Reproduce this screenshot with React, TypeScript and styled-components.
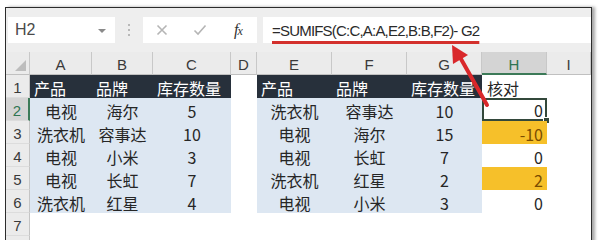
import React from 'react';
import styled, { createGlobalStyle, css } from 'styled-components';

const Global = createGlobalStyle`
  html, body { margin: 0; padding: 0; background: #fff; }
  body { font-family: "Liberation Sans", "Noto Sans CJK SC", sans-serif; overflow: hidden; }
`;

const Page = styled.div`
  width: 600px;
  height: 240px;
  padding: 7px 0 0 5px;
  box-sizing: border-box;
  overflow: hidden;
  background: #fff;
`;

const Frame = styled.div`
  position: relative;
  width: 587px;
  height: 240px;
  box-sizing: border-box;
  border: 1px solid #2c2c2c;
  border-bottom: none;
  box-shadow: 3px 0 3px rgba(0, 0, 0, 0.35);
  background: #fff;
  overflow: visible;
`;

const FormulaBar = styled.div`
  display: flex;
  align-items: flex-start;
  height: 44px;
  padding: 9px 0 0 2px;
  box-sizing: border-box;
  background: #eeeeee;
`;

const NameBox = styled.div`
  width: 107px;
  height: 26px;
  box-sizing: border-box;
  background: #fff;
  display: flex;
  align-items: center;
  justify-content: space-between;
  padding: 0 9px 0 7px;
  font-size: 16px;
  color: #4a4a4a;
`;

const DropArrow = styled.span`
  width: 0;
  height: 0;
  border-left: 4px solid transparent;
  border-right: 4px solid transparent;
  border-top: 4px solid #8a8a8a;
  margin-top: 1px;
`;

const Dots = styled.div`
  width: 28px;
  height: 26px;
  display: flex;
  flex-direction: column;
  align-items: center;
  justify-content: center;
  gap: 3px;
`;

const Dot = styled.span`
  width: 2px;
  height: 2px;
  background: #b8b8b8;
`;

const FxBox = styled.div`
  width: 114px;
  height: 26px;
  background: #fff;
  display: grid;
  grid-template-columns: repeat(3, 38px);
  align-items: center;
  justify-items: center;
`;

const FxLabel = styled.span`
  font-family: "Liberation Serif", serif;
  font-style: italic;
  font-size: 16px;
  color: #333;
  letter-spacing: -1px;
`;

const FxSub = styled.span`
  font-size: 12px;
`;

const FormulaInput = styled.div`
  flex: 1;
  margin-left: 6px;
  height: 26px;
  background: #fff;
  display: flex;
  align-items: center;
  padding-left: 9px;
  font-size: 15px;
  letter-spacing: -0.8px;
  color: #2a2a2a;
  white-space: nowrap;
`;

const FormulaText = styled.span`
  text-decoration: underline;
  text-decoration-color: #d3302c;
  text-decoration-thickness: 3px;
  text-underline-offset: 5px;
`;

const Sheet = styled.div`
  display: grid;
  grid-template-columns: 24px 62px 61px 78px 26px 75px 75px 75px 65px 1fr;
  grid-auto-rows: 23px;
`;

const HeaderBase = css`
  background: #ebebeb;
  display: flex;
  align-items: center;
  justify-content: center;
  box-sizing: border-box;
  font-size: 15px;
  color: #3a3a3a;
`;

const Corner = styled.div`
  ${HeaderBase};
  position: relative;
  border-right: 1px solid #c8c8c8;
  border-bottom: 1px solid #c0c0c0;
  &::after {
    content: '';
    position: absolute;
    right: 3px;
    bottom: 3px;
    border-left: 11px solid transparent;
    border-bottom: 11px solid #bdbdbd;
  }
`;

const ColHead = styled.div<{ $active?: boolean }>`
  ${HeaderBase};
  padding-top: 3px;
  border-right: 1px solid #c8c8c8;
  border-bottom: 1px solid #c0c0c0;
  ${(p) =>
    p.$active &&
    css`
      background: #d4d4d4;
      color: #2f7552;
      border-bottom: 2px solid #3c7a58;
    `}
`;

const RowHead = styled.div<{ $active?: boolean }>`
  ${HeaderBase};
  padding-top: 3px;
  border-right: 1px solid #c4c4c4;
  border-bottom: 1px solid #dcdcdc;
  ${(p) =>
    p.$active &&
    css`
      background: #d4d4d4;
      color: #2f7552;
      border-right: 2px solid #3c7a58;
    `}
`;

type Kind = 'head' | 'body' | 'plain' | 'warn';

const kindStyles: Record<Kind, ReturnType<typeof css>> = {
  head: css`
    background: #27303b;
    color: #fff;
    justify-content: flex-start;
    padding-left: 4px;
  `,
  body: css`
    background: #dde7f2;
    color: #262626;
    justify-content: center;
  `,
  plain: css`
    background: #fff;
    color: #262626;
    justify-content: flex-end;
    padding-right: 4px;
  `,
  warn: css`
    background: #f6c02a;
    color: #7a4c00;
    justify-content: flex-end;
    padding-right: 4px;
  `,
};

const Cell = styled.div<{ $kind: Kind; $left?: boolean; $selected?: boolean }>`
  position: relative;
  display: flex;
  align-items: center;
  box-sizing: border-box;
  padding-top: 3px;
  font-family: "Noto Sans CJK SC", "Liberation Sans", sans-serif;
  font-size: 16px;
  line-height: 20px;
  white-space: nowrap;
  ${(p) => kindStyles[p.$kind]};
  ${(p) =>
    p.$left &&
    css`
      justify-content: flex-start;
      padding-left: 5px;
    `}
  ${(p) =>
    p.$selected &&
    css`
      border: 2px solid #33483b;
      padding-right: 2px;
      padding-top: 1px;
      &::after {
        content: '';
        position: absolute;
        right: -5px;
        bottom: -5px;
        width: 5px;
        height: 5px;
        background: #33483b;
        border: 1px solid #fff;
      }
    `}
`;

const Empty = styled.div`
  background: #fff;
`;

const Overlay = styled.svg`
  position: absolute;
  left: 0;
  top: 0;
  pointer-events: none;
`;

const cols = ['A', 'B', 'C', 'D', 'E', 'F', 'G', 'H', 'I'];

const rows: string[][] = [
  ['产品', '品牌', '库存数量', '', '产品', '品牌', '库存数量', '核对'],
  ['电视', '海尔', '5', '', '洗衣机', '容事达', '10', '0'],
  ['洗衣机', '容事达', '10', '', '电视', '海尔', '15', '-10'],
  ['电视', '小米', '3', '', '电视', '长虹', '7', '0'],
  ['电视', '长虹', '7', '', '洗衣机', '红星', '2', '2'],
  ['洗衣机', '红星', '4', '', '电视', '小米', '3', '0'],
];

const XIcon = () => (
  <svg width="12" height="12" viewBox="0 0 12 12">
    <path d="M1.5 1.5 L10.5 10.5 M10.5 1.5 L1.5 10.5" stroke="#b5b5b5" strokeWidth="1.6" fill="none" />
  </svg>
);

const CheckIcon = () => (
  <svg width="14" height="12" viewBox="0 0 14 12">
    <path d="M1.5 6.5 L5 10 L12.5 1.5" stroke="#b5b5b5" strokeWidth="1.6" fill="none" />
  </svg>
);

function renderRow(r: number) {
  const data = rows[r - 1];
  const cells: React.ReactNode[] = [];
  for (let c = 0; c < 9; c++) {
    const key = `${r}-${c}`;
    if (!data || c === 3 || c === 8) {
      cells.push(<Empty key={key} />);
      continue;
    }
    const v = data[c];
    if (c === 7) {
      if (r === 1) {
        cells.push(
          <Cell key={key} $kind="plain" $left>
            {v}
          </Cell>
        );
      } else {
        const warn = v !== '0';
        cells.push(
          <Cell key={key} $kind={warn ? 'warn' : 'plain'} $selected={r === 2}>
            {v}
          </Cell>
        );
      }
      continue;
    }
    cells.push(
      <Cell key={key} $kind={r === 1 ? 'head' : 'body'}>
        {v}
      </Cell>
    );
  }
  return (
    <React.Fragment key={r}>
      <RowHead $active={r === 2}>{r <= 7 ? r : ''}</RowHead>
      {cells}
    </React.Fragment>
  );
}

export default function App() {
  return (
    <>
      <Global />
      <Page>
        <Frame>
          <FormulaBar>
            <NameBox>
              <span>H2</span>
              <DropArrow />
            </NameBox>
            <Dots>
              <Dot />
              <Dot />
              <Dot />
            </Dots>
            <FxBox>
              <XIcon />
              <CheckIcon />
              <FxLabel>
                f<FxSub>x</FxSub>
              </FxLabel>
            </FxBox>
            <FormulaInput>
              <FormulaText>=SUMIFS(C:C,A:A,E2,B:B,F2)- G2</FormulaText>
            </FormulaInput>
          </FormulaBar>
          <Sheet>
            <Corner />
            {cols.map((c) => (
              <ColHead key={c} $active={c === 'H'}>
                {c}
              </ColHead>
            ))}
            {[1, 2, 3, 4, 5, 6, 7, 8].map((r) => renderRow(r))}
          </Sheet>
          <Overlay width="585" height="232" viewBox="6 8 585 232">
            <line x1="487" y1="105" x2="461" y2="59" stroke="#d9282b" strokeWidth="4" strokeLinecap="round" />
            <polygon points="452,45 468,55 453,64" fill="#d9282b" />
          </Overlay>
        </Frame>
      </Page>
    </>
  );
}
